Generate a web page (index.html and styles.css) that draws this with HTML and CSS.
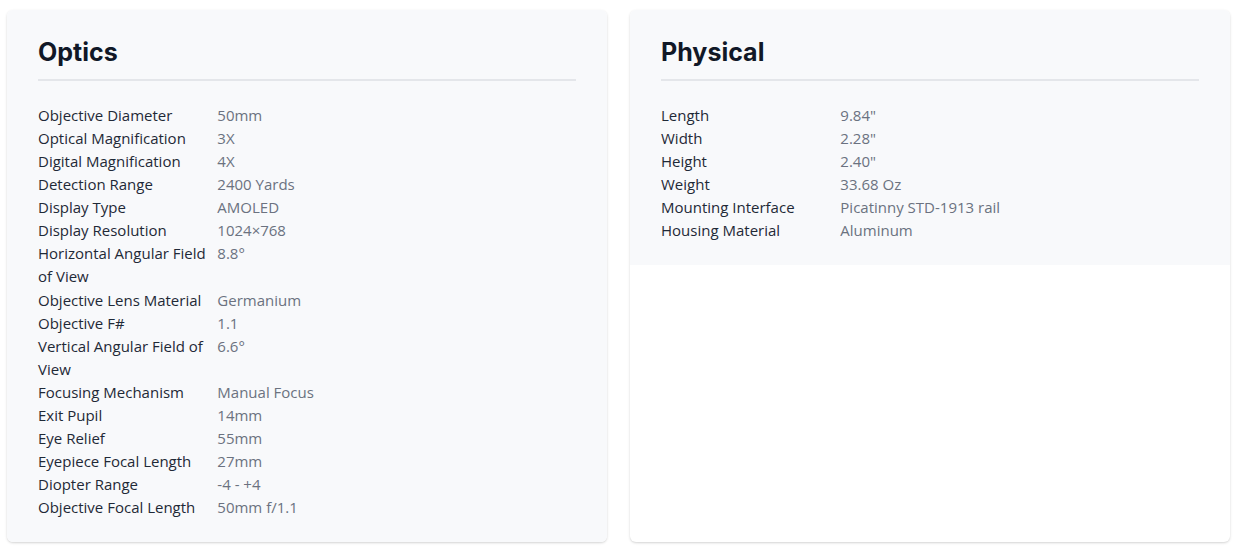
FILE: index.html
```html
<!DOCTYPE html>
<html>
<head>
<meta charset="utf-8">
<link rel="stylesheet" href="styles.css">
</head>
<body>
<div class="page">
  <section class="card">
    <div class="card-inner">
      <h2 class="card-title">Optics</h2>
      <dl class="specs">
        <dt>Objective Diameter</dt><dd>50mm</dd>
        <dt>Optical Magnification</dt><dd>3X</dd>
        <dt>Digital Magnification</dt><dd>4X</dd>
        <dt>Detection Range</dt><dd>2400 Yards</dd>
        <dt>Display Type</dt><dd>AMOLED</dd>
        <dt>Display Resolution</dt><dd>1024×768</dd>
        <dt>Horizontal Angular Field of View</dt><dd>8.8°</dd>
        <dt>Objective Lens Material</dt><dd>Germanium</dd>
        <dt>Objective F#</dt><dd>1.1</dd>
        <dt>Vertical Angular Field of View</dt><dd>6.6°</dd>
        <dt>Focusing Mechanism</dt><dd>Manual Focus</dd>
        <dt>Exit Pupil</dt><dd>14mm</dd>
        <dt>Eye Relief</dt><dd>55mm</dd>
        <dt>Eyepiece Focal Length</dt><dd>27mm</dd>
        <dt>Diopter Range</dt><dd>-4 - +4</dd>
        <dt>Objective Focal Length</dt><dd>50mm f/1.1</dd>
      </dl>
    </div>
  </section>
  <section class="card">
    <div class="card-inner">
      <h2 class="card-title">Physical</h2>
      <dl class="specs">
        <dt>Length</dt><dd>9.84"</dd>
        <dt>Width</dt><dd>2.28"</dd>
        <dt>Height</dt><dd>2.40"</dd>
        <dt>Weight</dt><dd>33.68 Oz</dd>
        <dt>Mounting Interface</dt><dd>Picatinny STD-1913 rail</dd>
        <dt>Housing Material</dt><dd>Aluminum</dd>
      </dl>
    </div>
  </section>
</div>
</body>
</html>
```

FILE: styles.css
```css
html, body {
  margin: 0;
  padding: 0;
  background: #ffffff;
}
.page {
  display: flex;
  align-items: stretch;
  gap: 23px;
  padding: 10px 5px 9px 7px;
  font-family: "Open Sans", sans-serif;
}
.card {
  width: 600px;
  flex: none;
  background: #ffffff;
  border-radius: 6px;
  box-shadow: 0 1px 3px rgba(0, 0, 0, 0.12), 0 1px 2px rgba(0, 0, 0, 0.06);
  overflow: hidden;
}
.card-inner {
  background: #f8f9fb;
  padding: 26px 31px 23px 31px;
}
.card-title {
  margin: 0;
  padding-bottom: 11px;
  border-bottom: 2px solid #e4e6ea;
  font-family: "Inter", sans-serif;
  font-weight: 700;
  font-size: 25px;
  line-height: 32px;
  color: #111827;
}
.specs {
  display: grid;
  grid-template-columns: 1fr 2fr;
  margin: 23px 0 0 0;
  font-size: 15px;
  line-height: 23.06px;
}
.specs dt {
  margin: 0;
  color: #1f2937;
}
.specs dd {
  margin: 0;
  color: #6b7280;
}
```
